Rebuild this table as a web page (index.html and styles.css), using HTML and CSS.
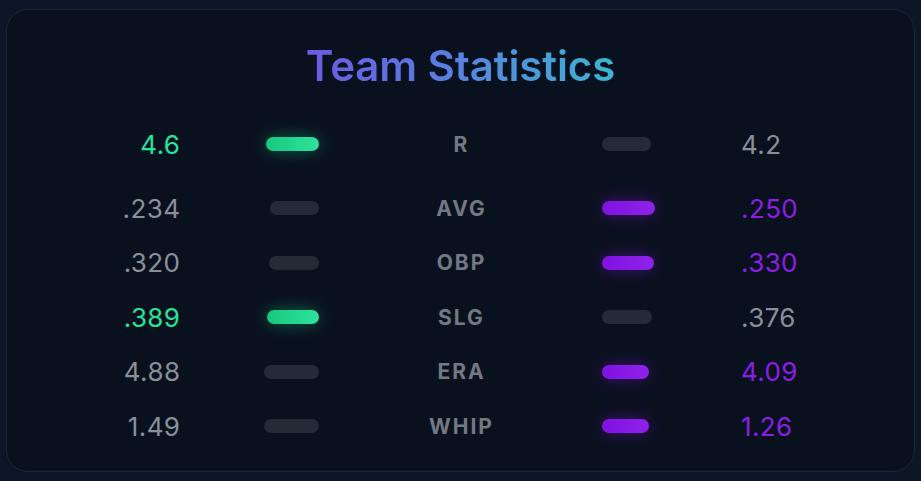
FILE: index.html
```html
<!DOCTYPE html>
<html lang="en">
<head>
<meta charset="utf-8">
<title>Team Statistics</title>
<link rel="stylesheet" href="styles.css">
</head>
<body>
  <section class="card">
    <h1 class="title">Team Statistics</h1>
    <div class="stats">
      <div class="row row-first">
        <span class="val val-left win-green">4.6</span>
        <div class="track track-left"><div class="bar bar-green" style="width:52.3%"></div></div>
        <span class="label">R</span>
        <div class="track track-right"><div class="bar bar-gray" style="width:47.7%"></div></div>
        <span class="val val-right">4.2</span>
      </div>
      <div class="row">
        <span class="val val-left">.234</span>
        <div class="track track-left"><div class="bar bar-gray" style="width:48.3%"></div></div>
        <span class="label">AVG</span>
        <div class="track track-right"><div class="bar bar-purple" style="width:51.7%"></div></div>
        <span class="val val-right win-purple">.250</span>
      </div>
      <div class="row">
        <span class="val val-left">.320</span>
        <div class="track track-left"><div class="bar bar-gray" style="width:49.2%"></div></div>
        <span class="label">OBP</span>
        <div class="track track-right"><div class="bar bar-purple" style="width:50.8%"></div></div>
        <span class="val val-right win-purple">.330</span>
      </div>
      <div class="row">
        <span class="val val-left win-green">.389</span>
        <div class="track track-left"><div class="bar bar-green" style="width:50.8%"></div></div>
        <span class="label">SLG</span>
        <div class="track track-right"><div class="bar bar-gray" style="width:49.2%"></div></div>
        <span class="val val-right">.376</span>
      </div>
      <div class="row">
        <span class="val val-left">4.88</span>
        <div class="track track-left"><div class="bar bar-gray" style="width:54.4%"></div></div>
        <span class="label">ERA</span>
        <div class="track track-right"><div class="bar bar-purple" style="width:45.6%"></div></div>
        <span class="val val-right win-purple">4.09</span>
      </div>
      <div class="row">
        <span class="val val-left">1.49</span>
        <div class="track track-left"><div class="bar bar-gray" style="width:54.2%"></div></div>
        <span class="label">WHIP</span>
        <div class="track track-right"><div class="bar bar-purple" style="width:45.8%"></div></div>
        <span class="val val-right win-purple">1.26</span>
      </div>
    </div>
  </section>
</body>
</html>
```

FILE: styles.css
```css
* { box-sizing: border-box; }

html, body {
  margin: 0;
  height: 100%;
}

body {
  background: #0c1626;
  padding: 9px 6px;
  font-family: Inter, "Noto Sans", "Liberation Sans", sans-serif;
}

.card {
  height: 463px;
  background: #0a111e;
  border: 1px solid #1c2636;
  border-radius: 22px;
  padding: 31px 0 0;
}

.title {
  margin: 0 auto 26px;
  width: max-content;
  text-align: center;
  font-size: 42px;
  line-height: 50px;
  font-weight: 600;
  letter-spacing: -0.1px;
  background: linear-gradient(90deg, #6a5be0 0%, #5a7ee0 45%, #3db4d2 100%);
  -webkit-background-clip: text;
  background-clip: text;
  color: transparent;
}

.stats {
  display: flex;
  flex-direction: column;
}

.row {
  display: grid;
  grid-template-columns: 1fr 102px 209px 102px 1fr;
  column-gap: 37px;
  align-items: center;
  height: 54.5px;
}

.row-first {
  margin-bottom: 9.5px;
}

.val {
  font-size: 26px;
  font-weight: 400;
  letter-spacing: 0.4px;
  color: #8a9099;
  white-space: nowrap;
}

.val-left { text-align: right; margin-right: -0.4px; }
.val-right { text-align: left; }

.win-green { color: #27e49a; }
.win-purple { color: #8d1ee6; }

.label {
  text-align: center;
  font-size: 21px;
  font-weight: 700;
  letter-spacing: 2px;
  padding-left: 2px;
  color: #737982;
}

.track {
  display: flex;
  height: 14px;
}

.track-left { justify-content: flex-end; }
.track-right { justify-content: flex-start; }

.bar {
  height: 100%;
  border-radius: 7px;
}

.bar-gray {
  background: #232b37;
}

.bar-green {
  background: linear-gradient(90deg, #16c87d, #2fe39c);
  box-shadow: 0 0 16px rgba(20, 200, 130, 0.45);
}

.bar-purple {
  background: linear-gradient(90deg, #8012e2, #8f22ea);
  box-shadow: 0 0 16px rgba(130, 20, 225, 0.45);
}
```
